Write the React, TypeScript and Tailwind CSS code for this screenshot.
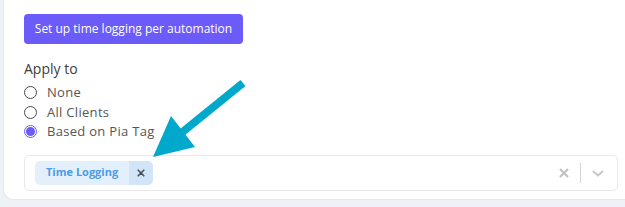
import React from 'react';

const FONT = { fontFamily: '"Open Sans", "Noto Sans", sans-serif' };

const OPTIONS = [
  { id: 'none', label: 'None' },
  { id: 'all', label: 'All Clients' },
  { id: 'tag', label: 'Based on Pia Tag' },
];

function Radio({ checked }: { checked: boolean }) {
  return checked ? (
    <span className="flex h-[13px] w-[13px] items-center justify-center rounded-full border border-[#6b5bf7] bg-white">
      <span className="h-[9px] w-[9px] rounded-full bg-[#6b5bf7]" />
    </span>
  ) : (
    <span className="h-[13px] w-[13px] rounded-full border border-[#4a4a4a] bg-white" />
  );
}

export default function App() {
  const selected = 'tag';

  return (
    <div className="relative h-[207px] w-[625px] overflow-hidden bg-[#eef1f5]" style={FONT}>
      <div className="ml-[3px] h-[200px] w-[640px] rounded-bl-[10px] border-l border-b border-[#e4e8ee] bg-white pl-[20px] pt-[14px]">
        <button className="flex h-[30px] w-[219px] items-center justify-center rounded-[4px] bg-[#6b5bf9] text-[12px] text-white">
          Set up time logging per automation
        </button>

        <div className="mt-[15px] text-[14px] leading-[20px] text-[#3d3d3d]">Apply to</div>

        <div className="mt-[4px] flex flex-col">
          {OPTIONS.map((o) => (
            <label key={o.id} className="flex h-[19.5px] items-center gap-[10px] text-[13px] tracking-[0.3px] text-[#555]">
              <Radio checked={o.id === selected} />
              <span>{o.label}</span>
            </label>
          ))}
        </div>

        <div className="mt-[13px] flex h-[36px] w-[594px] items-center rounded-[5px] border border-[#e6e8eb] pl-[10px] pr-[10px]">
          <div className="flex h-[24px] items-stretch overflow-hidden rounded-[5px]">
            <span className="flex items-center bg-[#e3f0fc] pl-[11px] pr-[11px] text-[11px] font-bold text-[#4c9be8]">
              Time Logging
            </span>
            <span className="flex w-[24px] items-center justify-center bg-[#d2e5f8]">
              <svg width="8" height="8" viewBox="0 0 10 10">
                <path d="M1.5 1.5 L8.5 8.5 M8.5 1.5 L1.5 8.5" stroke="#46505b" strokeWidth="2" strokeLinecap="round" />
              </svg>
            </span>
          </div>
          <div className="flex-1" />
          <svg width="12" height="12" viewBox="0 0 12 12" className="mr-[10px]">
            <path d="M2 2 L10 10 M10 2 L2 10" stroke="#c2c2c2" strokeWidth="2.2" />
          </svg>
          <span className="h-[20px] w-px bg-[#d4d4d4]" />
          <svg width="14" height="10" viewBox="0 0 14 10" className="ml-[10px] mr-[2px]">
            <path d="M2 3 L7 7.5 L12 3" stroke="#c6c6c6" strokeWidth="2" fill="none" />
          </svg>
        </div>
      </div>

      <svg className="pointer-events-none absolute left-0 top-0" width="625" height="207" viewBox="0 0 625 207">
        <line x1="243" y1="83" x2="180" y2="134" stroke="#00a9cb" strokeWidth="8" />
        <polygon points="153,157 171,116 195,147" fill="#00a9cb" />
      </svg>
    </div>
  );
}
